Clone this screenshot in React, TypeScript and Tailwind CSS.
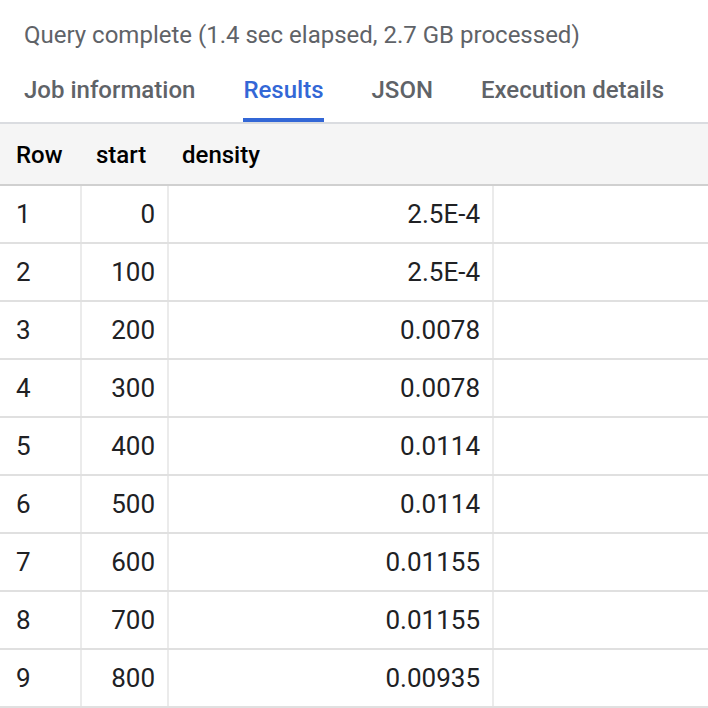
const rows = [
  { row: 1, start: 0, density: '2.5E-4' },
  { row: 2, start: 100, density: '2.5E-4' },
  { row: 3, start: 200, density: '0.0078' },
  { row: 4, start: 300, density: '0.0078' },
  { row: 5, start: 400, density: '0.0114' },
  { row: 6, start: 500, density: '0.0114' },
  { row: 7, start: 600, density: '0.01155' },
  { row: 8, start: 700, density: '0.01155' },
  { row: 9, start: 800, density: '0.00935' },
];

const tabs = ['Job information', 'Results', 'JSON', 'Execution details'];

export default function App() {
  return (
    <div className="w-[708px] h-[708px] overflow-hidden bg-white font-['Roboto',sans-serif]">
      <div className="h-[70px] flex items-center px-6 text-[24px] text-[#5f6368]">
        Query complete (1.4 sec elapsed, 2.7 GB processed)
      </div>

      <div className="flex gap-[48px] px-6 border-b-2 border-[#dadce0]">
        {tabs.map((t) => {
          const active = t === 'Results';
          return (
            <div key={t} className="flex flex-col">
              <div
                className={`h-[48px] flex items-center pb-2 text-[24px] font-medium whitespace-nowrap ${
                  active ? 'text-[#3367d6]' : 'text-[#5f6368]'
                }`}
              >
                {t}
              </div>
              <div className={`h-[4px] ${active ? 'bg-[#3367d6]' : 'bg-transparent'}`} />
            </div>
          );
        })}
      </div>

      <div className="text-[26px] text-[#202124]">
        <div className="flex h-[62px] pt-[2px] bg-[#f5f5f5] border-b-2 border-[#d0d0d0] text-[24px] font-medium text-black">
          <div className="w-[82px] shrink-0 flex items-center pl-4">Row</div>
          <div className="w-[87px] shrink-0 flex items-center pl-[14px]">start</div>
          <div className="w-[325px] shrink-0 flex items-center pl-[13px]">density</div>
          <div className="grow" />
        </div>

        {rows.map((r) => (
          <div key={r.row} className="flex h-[58px] border-b-2 border-[#e0e0e0]">
            <div className="w-[82px] shrink-0 flex items-center pl-4 border-r-2 border-[#ebebeb]">{r.row}</div>
            <div className="w-[87px] shrink-0 flex items-center justify-end pr-3 border-r-2 border-[#ebebeb]">
              {r.start}
            </div>
            <div className="w-[325px] shrink-0 flex items-center justify-end pr-3 border-r-2 border-[#ebebeb]">
              {r.density}
            </div>
            <div className="grow" />
          </div>
        ))}
      </div>
    </div>
  );
}
